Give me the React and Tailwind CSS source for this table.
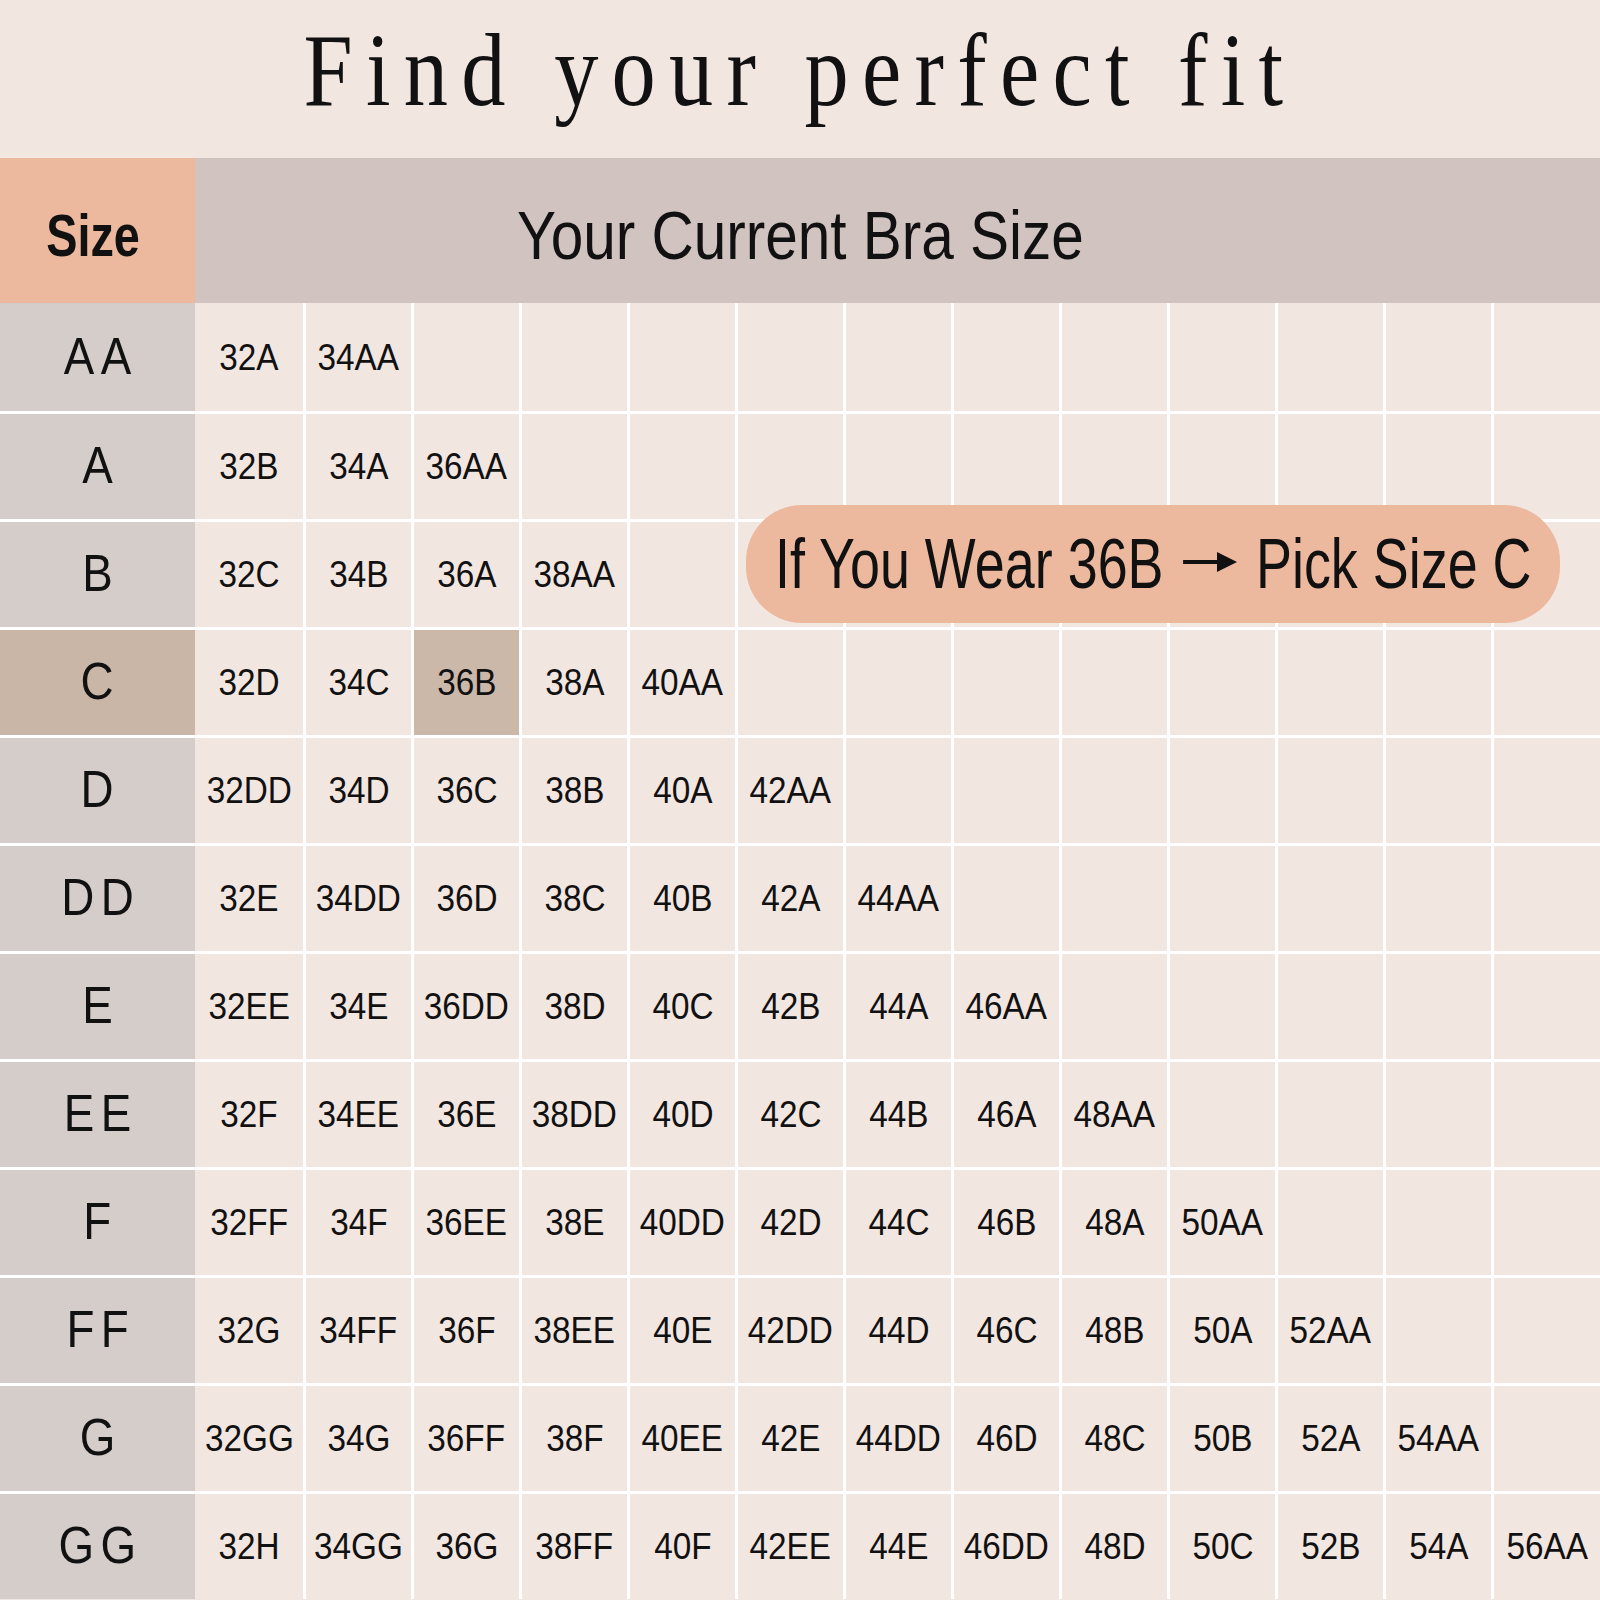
import clsx from "clsx";

const rows = [
  { label: "AA", sizes: ["32A", "34AA"] },
  { label: "A", sizes: ["32B", "34A", "36AA"] },
  { label: "B", sizes: ["32C", "34B", "36A", "38AA"] },
  { label: "C", sizes: ["32D", "34C", "36B", "38A", "40AA"], active: true },
  { label: "D", sizes: ["32DD", "34D", "36C", "38B", "40A", "42AA"] },
  { label: "DD", sizes: ["32E", "34DD", "36D", "38C", "40B", "42A", "44AA"] },
  { label: "E", sizes: ["32EE", "34E", "36DD", "38D", "40C", "42B", "44A", "46AA"] },
  { label: "EE", sizes: ["32F", "34EE", "36E", "38DD", "40D", "42C", "44B", "46A", "48AA"] },
  { label: "F", sizes: ["32FF", "34F", "36EE", "38E", "40DD", "42D", "44C", "46B", "48A", "50AA"] },
  { label: "FF", sizes: ["32G", "34FF", "36F", "38EE", "40E", "42DD", "44D", "46C", "48B", "50A", "52AA"] },
  { label: "G", sizes: ["32GG", "34G", "36FF", "38F", "40EE", "42E", "44DD", "46D", "48C", "50B", "52A", "54AA"] },
  { label: "GG", sizes: ["32H", "34GG", "36G", "38FF", "40F", "42EE", "44E", "46DD", "48D", "50C", "52B", "54A", "56AA"] },
];

const COLS = 13;

const Cell = ({ value, first, last, highlight }) => (
  <div
    className={clsx(
      "h-full flex items-center justify-center",
      last ? "flex-1" : "w-[108px]",
      !first && "border-l-[3px] border-white",
      highlight ? "bg-[#CBB8A9]" : "bg-[#F2E6E1]"
    )}
  >
    {value && (
      <span className="inline-block scale-x-[0.9] text-[37px] leading-none text-[#111]">
        {value}
      </span>
    )}
  </div>
);

const Arrow = () => (
  <svg width="70" height="20" viewBox="0 0 70 20" className="mx-[25px] mb-[4px] shrink-0">
    <line x1="0" y1="10" x2="48" y2="10" stroke="#111" strokeWidth="4" />
    <polygon points="44,0 70,10 44,20" fill="#111" />
  </svg>
);

const App = () => {
  return (
    <div className="relative w-[1600px] h-[1600px] overflow-hidden bg-[#F2E6E1] font-['Liberation_Sans',Arial,sans-serif]">
      {/* title */}
      <div className="h-[158px] flex justify-center pt-[18px]">
        <h1 className="inline-block scale-x-[0.85] font-['Liberation_Serif','Times_New_Roman',serif] text-[104px] leading-none tracking-[0.15em] text-[#111] whitespace-nowrap">
          Find your perfect fit
        </h1>
      </div>

      {/* header */}
      <div className="h-[145px] flex">
        <div className="w-[195px] bg-[#ECB89E] flex items-center justify-center pt-[10px] pr-[8px]">
          <span className="inline-block scale-x-[0.78] text-[60px] font-bold leading-none text-[#111]">
            Size
          </span>
        </div>
        <div className="flex-1 bg-[#D1C3C0] flex items-center justify-center pr-[195px] pt-[8px]">
          <span className="inline-block scale-x-[0.86] text-[68px] leading-none text-[#111] whitespace-nowrap">
            Your Current Bra Size
          </span>
        </div>
      </div>

      {/* grid */}
      {rows.map((row, i) => (
        <div
          key={row.label}
          className={clsx("flex h-[108px]", i > 0 && "border-t-[3px] border-white")}
        >
          <div
            className={clsx(
              "w-[195px] shrink-0 flex items-center justify-center pb-[3px]",
              row.active ? "bg-[#C9B6A7]" : "bg-[#D5CDCA]"
            )}
          >
            <span className="inline-block scale-x-[0.88] text-[52px] leading-none tracking-[0.14em] pl-[0.14em] text-[#111]">
              {row.label}
            </span>
          </div>
          {Array.from({ length: COLS }).map((_, j) => (
            <Cell
              key={j}
              value={row.sizes[j]}
              first={j === 0}
              last={j === COLS - 1}
              highlight={row.sizes[j] === "36B"}
            />
          ))}
        </div>
      ))}

      {/* callout */}
      <div className="absolute left-[746px] top-[505px] w-[814px] h-[118px] rounded-[56px] bg-[#ECB89E] flex items-center justify-center">
        <span className="flex items-center scale-x-[0.77] text-[70px] leading-none text-[#111] whitespace-nowrap">
          <span>If You Wear 36B</span>
          <Arrow />
          <span>Pick Size C</span>
        </span>
      </div>
    </div>
  );
};

export default App;
